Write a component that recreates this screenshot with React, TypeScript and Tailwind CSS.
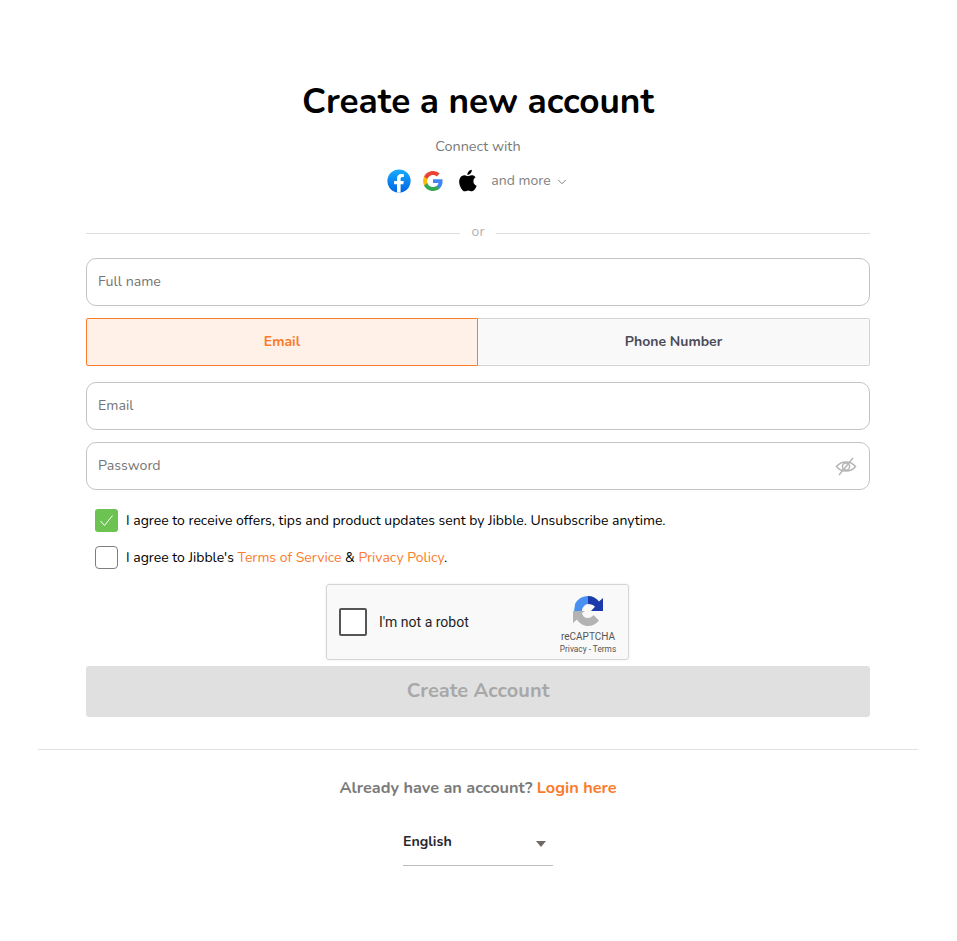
import React from 'react'
import { ChevronDown } from 'lucide-react'

function FacebookIcon() {
  return (
    <svg width="24" height="24" viewBox="0 0 24 24">
      <defs>
        <linearGradient id="fb" x1="0" y1="0" x2="0" y2="1">
          <stop offset="0" stopColor="#18acfe" />
          <stop offset="1" stopColor="#0163e0" />
        </linearGradient>
      </defs>
      <circle cx="12" cy="12" r="11.6" fill="url(#fb)" />
      <path
        d="M16.3 15.3l.5-3.3h-3.2V9.9c0-.9.4-1.8 1.9-1.8h1.4V5.3s-1.3-.2-2.6-.2c-2.6 0-4.3 1.6-4.3 4.4V12H7.1v3.3H10v8.1c.6.1 1.2.2 1.8.2s1.2-.1 1.8-.2v-8.1h2.7z"
        fill="#fff"
      />
    </svg>
  )
}

function GoogleIcon() {
  return (
    <svg width="20" height="20" viewBox="0 0 24 24">
      <path d="M23.5 12.3c0-.8-.1-1.6-.2-2.4H12v4.5h6.5c-.3 1.5-1.1 2.8-2.4 3.6v3h3.9c2.2-2.1 3.5-5.1 3.5-8.7z" fill="#4285f4" />
      <path d="M12 24c3.2 0 6-1.1 8-2.9l-3.9-3c-1.1.7-2.5 1.2-4.1 1.2-3.1 0-5.8-2.1-6.7-5H1.3v3.1C3.3 21.3 7.3 24 12 24z" fill="#34a853" />
      <path d="M5.3 14.3c-.5-1.5-.5-3.1 0-4.6V6.6h-4c-1.7 3.4-1.7 7.4 0 10.8l4-3.1z" fill="#fbbc04" />
      <path d="M12 4.7c1.7 0 3.3.6 4.6 1.8l3.4-3.4C17.8 1.1 15 0 12 0 7.3 0 3.3 2.7 1.3 6.6l4 3.1c.9-2.9 3.6-5 6.7-5z" fill="#ea4335" />
    </svg>
  )
}

function AppleIcon() {
  return (
    <svg width="20" height="24" viewBox="2.2 1.8 17.2 21.5">
      <path
        d="M16.5 12.7c0-2.3 1.9-3.4 2-3.5-1.1-1.6-2.8-1.8-3.4-1.8-1.4-.1-2.8.9-3.5.9-.7 0-1.9-.9-3.1-.8-1.6 0-3.1.9-3.9 2.3-1.7 2.9-.4 7.2 1.2 9.6.8 1.2 1.8 2.5 3 2.4 1.2 0 1.7-.8 3.1-.8 1.5 0 1.9.8 3.2.8 1.3 0 2.2-1.2 3-2.3.9-1.4 1.3-2.7 1.3-2.8-.1 0-2.9-1.1-2.9-4z"
        fill="#000"
      />
      <path d="M14.1 5.7c.7-.8 1.1-2 1-3.2-1 0-2.2.7-2.9 1.5-.6.7-1.2 1.9-1 3.1 1.1.1 2.2-.6 2.9-1.4z" fill="#000" />
    </svg>
  )
}

function EyeOffIcon() {
  return (
    <svg width="22" height="22" viewBox="0 0 22 22" fill="none" stroke="#b5b5b5" strokeWidth="1.5">
      <path d="M1.5 11.5c2.4-3 5.6-4.6 9.5-4.6s7.1 1.6 9.5 4.6c-2.4 3-5.6 4.6-9.5 4.6s-7.1-1.6-9.5-4.6z" />
      <circle cx="11" cy="11.5" r="3.6" />
      <path d="M18 3L4 20" />
    </svg>
  )
}

function RecaptchaIcon() {
  return (
    <svg width="30" height="30" viewBox="1 1 30 30">
      <path d="M16 1C10.5 1 5.7 4 3.2 8.5L2 16h8c0-3.5 2.5-6.5 6-7z" fill="#4a90f2" />
      <path d="M16 1c4.5 0 8.5 2 11 5.5L31 3v13H19l4-4.3C21.5 10 19 9 16 9z" fill="#1c3aa9" />
      <path d="M1 16v12l4-3.5C7.5 28.5 11.5 31 16 31c4.5 0 8.5-2 11-5.5L21.5 20c-1.5 2-3.5 3-5.5 3-3 0-5.5-2-6-5l3-2z" fill="#b3b3b3" />
    </svg>
  )
}

function TextField({ label, children }: { label: string; children?: React.ReactNode }) {
  return (
    <div className="flex h-12 items-center justify-between rounded-[10px] border border-[#c4c4c4] bg-white pl-[11px] pr-[12px]">
      <span className="text-[14.2px] text-[#757575]">{label}</span>
      {children}
    </div>
  )
}

export default function App() {
  return (
    <div className="min-h-[941px] bg-white font-['Nunito','Lato','Noto_Sans',sans-serif] text-black">
      <div className="ml-[38px] w-[880px] pt-[79px]">
        <div className="px-12">
          <h1 className="text-center text-[35.2px] leading-[44px] font-bold">Create a new account</h1>
          <p className="mt-[13px] text-center text-[14.4px] leading-5 text-[#7a7a7a]">Connect with</p>
          <div className="mt-[13px] flex h-6 items-center justify-center">
            <FacebookIcon />
            <span className="ml-[12px] flex">
              <GoogleIcon />
            </span>
            <span className="ml-[14px] flex">
              <AppleIcon />
            </span>
            <span className="ml-[14px] pb-[1px] text-[14px] text-[#7f7f7f]">and more</span>
            <ChevronDown className="ml-[4px] mt-[2px] text-[#6f6f6f]" size={14} strokeWidth={1.5} />
          </div>

          <div className="mt-[30px] flex h-5 items-center">
            <div className="h-px flex-1 bg-[#dedede]" />
            <span className="w-[36px] pb-[4px] text-center text-[14px] text-[#b3b3b3]">or</span>
            <div className="h-px flex-1 bg-[#dedede]" />
          </div>

          <div className="mt-[15px]">
            <TextField label="Full name" />
          </div>

          <div className="mt-3 flex h-12">
            <div className="flex w-1/2 items-center justify-center rounded-l-[2px] border border-[#fb7b2c] bg-[#fff1e8] pb-[2px] text-[14px] font-bold text-[#fb7b2c]">
              Email
            </div>
            <div className="flex w-1/2 items-center justify-center rounded-r-[2px] border border-l-0 border-[#d4d4d4] bg-[#f9f9f9] pb-[2px] text-[14px] font-bold text-[#4b4b57]">
              Phone Number
            </div>
          </div>

          <div className="mt-4">
            <TextField label="Email" />
          </div>
          <div className="mt-3">
            <TextField label="Password">
              <EyeOffIcon />
            </TextField>
          </div>

          <div className="mt-[19px] flex h-[23px] items-center pl-[9px]">
            <span className="flex h-[23px] w-[23px] items-center justify-center rounded-[3px] bg-[#6cc351]">
              <svg width="15" height="15" viewBox="0 0 15 15" fill="none" stroke="#fff" strokeWidth="1">
                <path d="M1.5 8l4 4.5 8-10" />
              </svg>
            </span>
            <span className="ml-[8px] text-[14px]">
              I agree to receive offers, tips and product updates sent by Jibble. Unsubscribe anytime.
            </span>
          </div>
          <div className="mt-[14px] flex h-[23px] items-center pl-[9px]">
            <span className="h-[23px] w-[23px] rounded-[4px] border border-[#7f7f7f] bg-white" />
            <span className="ml-[8px] text-[14px]">
              I agree to Jibble's <span className="text-[#fb7b2c]">Terms of Service</span> &{' '}
              <span className="text-[#fb7b2c]">Privacy Policy</span>.
            </span>
          </div>

          <div className="mt-[15px] flex justify-center pr-[1px]">
            <div className="flex h-[76px] w-[303px] items-center rounded-[3px] border border-[#d6d6d6] bg-[#f9f9f9] pl-[12px] pr-[11px] shadow-[0_0_3px_rgba(0,0,0,0.08)]">
              <span className="h-7 w-7 rounded-[2px] border-2 border-[#555] bg-white" />
              <span className="ml-[12px] flex-1 font-['Roboto',sans-serif] text-[14px] text-[#1f1f1f]">I'm not a robot</span>
              <div className="flex w-[58px] flex-col items-center pt-[7px] font-['Roboto',sans-serif] text-[#555]">
                <RecaptchaIcon />
                <span className="mt-[5px] text-[10px] leading-[12px]">reCAPTCHA</span>
                <span className="whitespace-nowrap text-[8.3px] leading-[12px] text-[#555]">Privacy - Terms</span>
              </div>
            </div>
          </div>

          <div className="mt-[6px] flex h-[51px] items-center justify-center rounded-[3px] bg-[#e0e0e0] pb-[2px] text-[20px] font-bold text-[#a8a8a8]">
            Create Account
          </div>
        </div>

        <div className="mt-8 h-px bg-[#e2e2e2]" />

        <p className="mt-[26px] text-center text-[16.3px] leading-[24px] font-bold text-[#7a7a7a]">
          Already have an account? <span className="text-[#fb7b2c]">Login here</span>
        </p>

        <div className="mx-auto mt-[23px] flex h-[43px] w-[150px] items-center justify-between border-b border-[#bdbdbd] pb-[4px]">
          <span className="text-[14.2px] font-bold text-[#26262e]">English</span>
          <span className="mr-[7px] mt-[4px] h-0 w-0 border-x-[5px] border-t-[6px] border-x-transparent border-t-[#6f6a66]" />
        </div>
      </div>
    </div>
  )
}
